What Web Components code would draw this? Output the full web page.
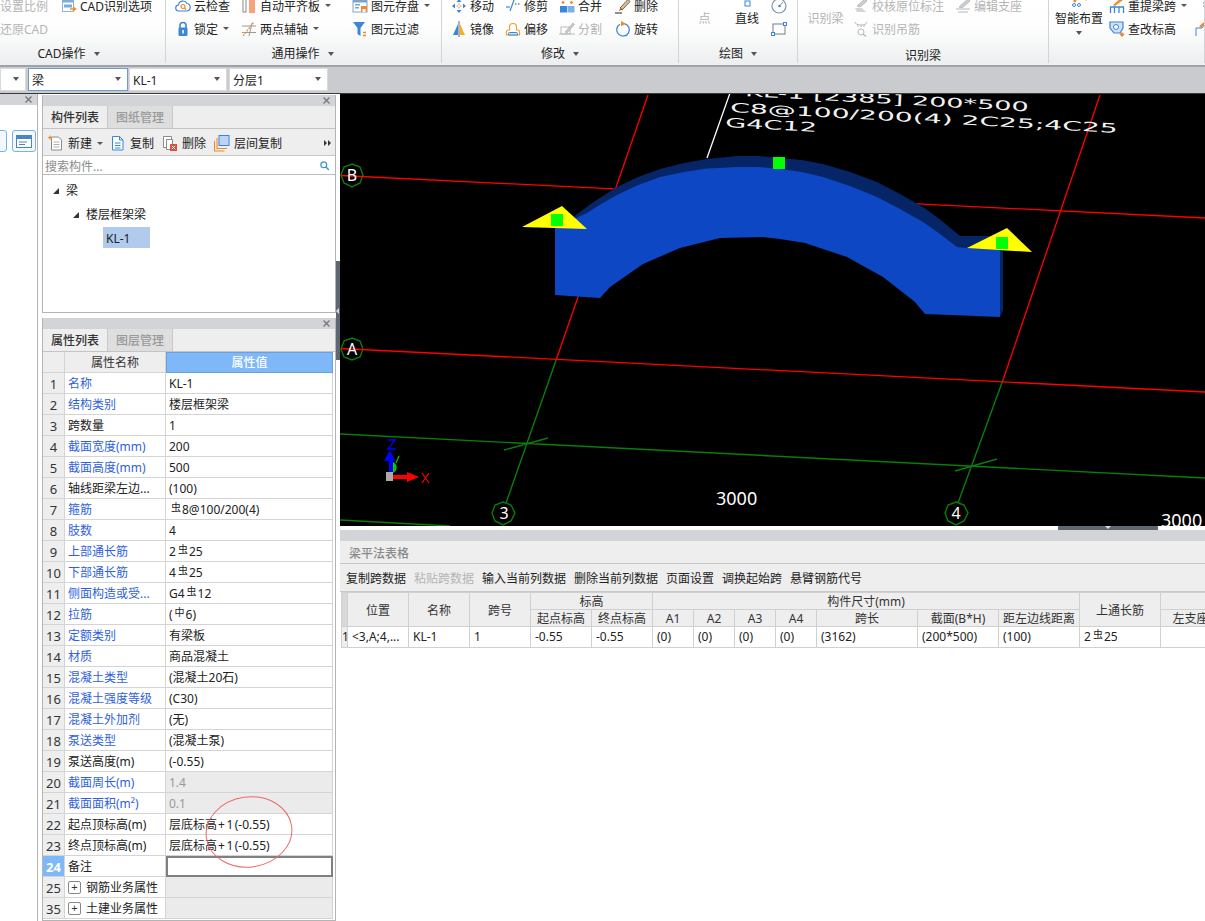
<!DOCTYPE html>
<html lang="zh">
<head>
<meta charset="utf-8">
<title>梁平法表格</title>
<style>
    html, body { margin: 0; height: 100%; overflow: hidden; background: #fff; }
    body { font: 12px/18px "Noto Sans", "Noto Sans CJK SC", sans-serif; color: #222; }
</style>
</head>
<body>
<gld-app></gld-app>

<script>
    (() => {
        const B = "#3a86d8", O = "#f08a2c", G = "#b9b9b9";
        const ICONS = {
            cad: `<rect x="1.5" y="1.5" width="11" height="12" fill="#fff" stroke="#8fb6de"/><rect x="1.5" y="1.5" width="11" height="3" fill="#7fa9d6"/><rect x="3" y="6.5" width="8" height="3" fill="#7fa9d6"/><path d="M9 11h5M12 9l2.500 2-2.500 2" stroke="${O}" fill="none" stroke-width="1.500"/>`,
            cloud: `<path d="M4 13a3 3 0 0 1-.500-6A4.500 4.500 0 0 1 12 5.500 3.800 3.800 0 0 1 12 13z" fill="#fff" stroke="${B}" stroke-width="1.200"/><circle cx="8" cy="8.500" r="2" fill="none" stroke="${O}" stroke-width="1.200"/><path d="M9.500 10l1.500 1.500" stroke="${O}" stroke-width="1.200"/>`,
            plate: `<rect x="2" y="1" width="3" height="13" fill="#fff" stroke="#8a8a8a"/><rect x="8" y="0" width="6" height="15" fill="#f6a27a"/>`,
            save: `<rect x="1" y="2" width="14" height="12" fill="#fff" stroke="#7ba4cf"/><rect x="1" y="2" width="14" height="2.500" fill="#7ba4cf"/><rect x="3" y="6" width="5" height="1.500" fill="#7ba4cf"/><rect x="3" y="9" width="4" height="1.500" fill="#7ba4cf"/><rect x="9" y="8" width="6" height="6" fill="${O}"/><rect x="10.500" y="11" width="3" height="3" fill="#fff"/>`,
            lock: `<path d="M5 7V4.500a3 3 0 0 1 6 0V7" fill="none" stroke="${B}" stroke-width="1.600"/><rect x="3.500" y="6.500" width="9" height="8.500" rx="1.200" fill="${B}"/><rect x="7.300" y="9" width="1.500" height="3.500" fill="#fff"/>`,
            axis: `<path d="M1 11.500h14M1 5h14" stroke="#9a9a9a" stroke-width="1.100"/><path d="M2 15L13 1" stroke="${O}" stroke-width="1.200" stroke-dasharray="2 1"/><path d="M8 15L11 2" stroke="#9a9a9a"/>`,
            filter: `<path d="M1 1h12L8.500 7v8L5.500 13V7z" fill="${B}"/><path d="M11 11.500h3M11 14.500h3" stroke="${O}" stroke-width="1.500"/>`,
            move: `<path d="M8 1l2.500 3h-5zM8 15l2.500-3h-5zM1 8l3-2.500v5zM15 8l-3-2.500v5z" fill="${B}"/><path d="M5.500 8h1.500M9 8h1.500M8 5.500V7M8 9v1.500" stroke="${O}"/>`,
            trim: `<path d="M1 9h4" stroke="${B}" stroke-width="1.200"/><path d="M5 13l4-11" stroke="${B}" stroke-width="1.200"/><path d="M10 6h6" stroke="#444" stroke-dasharray="1.500 1.500"/>`,
            merge: `<rect x="1" y="8" width="7" height="6.500" fill="${B}"/><rect x="8.500" y="8" width="7" height="6.500" fill="#7fb0e5"/><path d="M2.500 4.500h3M11 4.500h3M4 3v3M12.500 3v3" stroke="${O}" stroke-width="1.300"/>`,
            erase: `<path d="M5 10L13 1.500l2 2L7 12z" fill="#d9c3a4" stroke="#7b5a3c"/><path d="M3.500 13L6 9.500 7.500 11.500z" fill="#c65a2a"/><path d="M0 15h7" stroke="#222"/>`,
            mirror: `<path d="M7 3v11H2z" fill="${B}"/><path d="M9 3v11h5z" fill="#f5b21f"/><path d="M8 0v16" stroke="#444" stroke-width=".8"/>`,
            offset: `<path d="M1.500 14v-3a2 2 0 0 1 2-2h1V6a3.500 3.500 0 0 1 7 0v3h1a2 2 0 0 1 2 2v3z" fill="#fff" stroke="#eba430" stroke-width="1.200"/><path d="M3.500 14v-1.500a1 1 0 0 1 1-1h7a1 1 0 0 1 1 1V14z" fill="#cfe1f5" stroke="${B}"/>`,
            split: `<path d="M2 13V6h9v7zM0 13h16" fill="none" stroke="${G}"/><path d="M6 11L14 2l1.500 1.500L8 12z" fill="#c9c9c9" stroke="#aaa" stroke-width=".6"/>`,
            rotate: `<path d="M9.500 2.600A6.300 6.300 0 1 1 5 3.200" fill="none" stroke="${B}" stroke-width="1.300"/><path d="M6 0l5 2.800-5 2.400z" fill="${O}"/>`,
            top1: `<path d="M8 0v5" stroke="#bbb"/>`,
            top2: `<rect x="6" y="7" width="5" height="5" fill="#fff" stroke="${B}"/>`,
            circle: `<circle cx="8" cy="8" r="7" fill="#fff" stroke="#8193a6" stroke-width="1.200"/><circle cx="8.500" cy="8" r="1.300" fill="${B}"/><path d="M9 7.500l3-3.500" stroke="#8193a6"/>`,
            rect: `<rect x="2" y="3" width="12" height="10" fill="#fff" stroke="#6d7d8d"/><rect x="0.500" y="11.500" width="3" height="3" fill="#fff" stroke="${B}"/><rect x="12.500" y="1.500" width="3" height="3" fill="#fff" stroke="${B}"/>`,
            check: `<path d="M2 10h7l4 4H4z" fill="#d5d5d5"/><path d="M4 8L12 1l2 2-7 6z" fill="#cfcfcf" stroke="#bbb"/>`,
            edit: `<path d="M1 11h14M3 14h10" stroke="${G}"/><path d="M4 9L13 1l2 2-8 7z" fill="#cfcfcf" stroke="#bbb"/>`,
            hang: `<path d="M2 1c0 4 12 4 12 0M5 4v2M8 4v2M11 4v2" fill="none" stroke="${G}"/><circle cx="8" cy="11" r="3" fill="none" stroke="${G}"/><path d="M10 13l3 2.500" stroke="${G}" stroke-width="1.500"/>`,
            reset: `<path d="M1.500 15V9h13v6M5.500 9v6M10 9v6" fill="none" stroke="${B}" stroke-width="1.300"/><path d="M4 7l8-7 2 2-8 6z" fill="${O}"/>`,
            level: `<path d="M1 1h13v6l-3 5H5L1 7z" fill="#cfe1f5" stroke="${B}" stroke-width="1.200"/><circle cx="7" cy="6" r="2.500" fill="#fff" stroke="${B}"/><path d="M13 11l2.500 2.500L13 16l-2.500-2.500z" fill="${O}"/>`,
            smart: `<path d="M3 8l4-6M11 0l5 6" stroke="${O}" stroke-width="2.500"/><circle cx="3" cy="11" r="1.500" fill="none" stroke="${B}"/><circle cx="8" cy="11" r="1.500" fill="none" stroke="${B}"/>`,
            edge1: `<path d="M9 4l6-3M9 4v6" stroke="${B}" stroke-dasharray="2 1"/>`,
            edge2: `<path d="M1 15V7h6l3-4 6 4" fill="none" stroke="${B}"/><path d="M5 6l6-5 3 3" stroke="${O}" stroke-width="2.500" fill="none"/>`,
            "new": `<path d="M3.500 2h7l3 3v10h-10z" fill="#fff" stroke="#8c8c8c"/><path d="M5.500 7h6M5.500 9.500h6M5.500 12h6" stroke="#b0b0b0"/><path d="M2 0l.8 1.700L4.500 2.500l-1.700.8L2 5l-.8-1.700L-.500 2.500l1.700-.8z" fill="${O}"/>`,
            copy: `<path d="M2.500 1.500h7l3.500 3.500v10h-10.500z" fill="#fff" stroke="${B}"/><path d="M9.500 1.500V5H13" fill="none" stroke="${B}"/><path d="M5 8h5.500M5 10.500h5.500M5 13h5.500" stroke="${B}"/>`,
            remove: `<path d="M1.500 1.500h8v3h-5v8h-3z" fill="#fff" stroke="#8c8c8c"/><path d="M4.500 4.500h6v10h-6z" fill="#fff" stroke="#8c8c8c"/><rect x="8" y="9" width="7" height="7" fill="#e04a3a"/><path d="M9.800 10.800l3.400 3.400M13.200 10.800l-3.400 3.400" stroke="#fff"/>`,
            floor: `<rect x="5" y="0.500" width="10" height="10" fill="#bcd6f2" stroke="${B}"/><path d="M3 3v10.500h10M.5 6v10h10" fill="none" stroke="${O}" stroke-width="1.100"/>`,
            search: `<circle cx="6.500" cy="6.500" r="4" fill="none" stroke="#3c96c8" stroke-width="1.700"/><path d="M9.500 9.500l4 4" stroke="#3c96c8" stroke-width="2"/>`,
        };

        // 16px icon picked by name
        class GldIcon extends HTMLElement {
            connectedCallback() {
                const root = this.shadowRoot || this.attachShadow({ mode: "open" });
                root.innerHTML = `<style>:host{display:inline-block;width:16px;height:16px;flex:none}svg{display:block;overflow:visible}</style>
                    <svg width="16" height="16" viewBox="0 0 16 16">${ICONS[this.getAttribute("name")] || ""}</svg>`;
            }
        }

        // icon + label tool used in the ribbon and in the panel toolbars
        class GldTool extends HTMLElement {
            connectedCallback() {
                const icon = this.getAttribute("icon");
                const label = this.getAttribute("label") || "";
                const root = this.shadowRoot || this.attachShadow({ mode: "open" });
                root.innerHTML = `<style>
                    :host{display:flex;align-items:center;height:23px;white-space:nowrap;color:#222}
                    :host([off]){color:#b4b4b4}
                    span{margin-left:var(--tool-gap,3px);margin-top:2px;line-height:12px}
                    .plain{margin-left:0}
                    i{width:0;height:0;margin-left:5px;border:3px solid transparent;border-top:3px solid #555;border-bottom:0}
                    </style>
                    ${icon ? `<gld-icon name="${icon}"></gld-icon>` : ""}
                    ${label ? `<span class="${icon ? "" : "plain"}">${label}</span>` : ""}
                    ${this.hasAttribute("arrow") ? "<i></i>" : ""}`;
            }
        }

        // big ribbon button: clipped icon on top, centred label under it
        class GldBigTool extends HTMLElement {
            connectedCallback() {
                const root = this.shadowRoot || this.attachShadow({ mode: "open" });
                root.innerHTML = `<style>
                    :host{display:flex;flex-direction:column;align-items:center;color:#222;white-space:nowrap}
                    :host([off]){color:#b4b4b4}
                    .ic{height:16px}
                    i{width:0;height:0;margin-top:3px;border:3px solid transparent;border-top:4px solid #555;border-bottom:0}
                    </style>
                    <div class="ic"><gld-icon name="${this.getAttribute("icon")}"></gld-icon></div>
                    <div>${this.getAttribute("label")}</div>
                    ${this.hasAttribute("arrow") ? "<i></i>" : ""}`;
            }
        }

        class GldRibCol extends HTMLElement {
            connectedCallback() {
                const root = this.shadowRoot || this.attachShadow({ mode: "open" });
                root.innerHTML = `<style>:host{display:block;flex:none;width:${this.getAttribute("w") || 60}px}</style><slot></slot>`;
            }
        }

        class GldRibGroup extends HTMLElement {
            connectedCallback() {
                const w = this.getAttribute("w");
                const pad = this.getAttribute("pad") || 0;
                const shift = this.getAttribute("shift") || 0;
                const low = this.getAttribute("low") || 0;
                const label = this.getAttribute("label");
                const root = this.shadowRoot || this.attachShadow({ mode: "open" });
                root.innerHTML = `<style>
                    :host{display:block;flex:none;width:${w}px;height:63px;box-sizing:border-box;border-right:1px solid #d2d4d6;overflow:hidden}
                    .cols{display:flex;height:46px;margin-top:-6px;padding-left:${pad}px;box-sizing:border-box}
                    .lab{display:flex;justify-content:center;align-items:center;height:18px;margin-top:${5 + +low}px;padding-right:${shift}px;color:#222}
                    i{width:0;height:0;margin-left:8px;border:3px solid transparent;border-top:4px solid #555;border-bottom:0}
                    </style>
                    <div class="cols"><slot></slot></div>
                    <div class="lab">${label || ""}${this.hasAttribute("noarrow") || !label ? "" : "<i></i>"}</div>`;
            }
        }

        class GldRibbon extends HTMLElement {
            connectedCallback() {
                const root = this.shadowRoot || this.attachShadow({ mode: "open" });
                root.innerHTML = `<style>
                    :host{display:flex;height:67px;box-sizing:border-box;overflow:hidden;border-bottom:2px solid #9fa2a6;
                        background:linear-gradient(#fff 0%,#fdfdfd 45%,#eceeef 100%)}
                    </style><slot></slot>`;
            }
        }

        class GldCombo extends HTMLElement {
            connectedCallback() {
                const root = this.shadowRoot || this.attachShadow({ mode: "open" });
                root.innerHTML = `<style>
                    :host{display:flex;align-items:center;justify-content:space-between;box-sizing:border-box;height:23px;
                        width:${this.getAttribute("w")}px;padding:0 6px 0 3px;background:#fff;border:1px solid #d8dade}
                    :host([focus]){border-color:#6f9ad6}
                    span{padding-top:3px}
                    i{width:0;height:0;border:3px solid transparent;border-top:4px solid #555;border-bottom:0}
                    </style><span>${this.getAttribute("label") || ""}</span><i></i>`;
            }
        }

        class GldComboBar extends HTMLElement {
            connectedCallback() {
                const root = this.shadowRoot || this.attachShadow({ mode: "open" });
                root.innerHTML = `<style>
                    :host{display:flex;align-items:center;gap:2px;height:27px;box-sizing:border-box;padding:0 0 2px;background:#c9cbcf;border-bottom:1px solid #3a3a3a}
                    </style><slot></slot>`;
            }
        }

        // grey strip with the close cross on top of each dock panel
        class GldDockHead extends HTMLElement {
            connectedCallback() {
                const root = this.shadowRoot || this.attachShadow({ mode: "open" });
                root.innerHTML = `<style>
                    :host{display:flex;align-items:center;justify-content:flex-end;height:11px;padding-right:5px;background:#d2d4d8;flex:none}
                    svg{display:block}
                    </style>${this.hasAttribute("noclose") ? "" : '<svg width="7" height="7" viewBox="0 0 7 7"><path d="M.5.5l6 6M6.500.5l-6 6" stroke="#777" stroke-width="1.300"/></svg>'}`;
            }
        }

        class GldTabs extends HTMLElement {
            connectedCallback() {
                const tabs = this.getAttribute("tabs").split(",");
                const root = this.shadowRoot || this.attachShadow({ mode: "open" });
                root.innerHTML = `<style>
                    :host{display:flex;height:23px;box-sizing:border-box;background:#eee;border-bottom:1px solid #c4c4c4;flex:none}
                    div{width:64px;text-align:center;line-height:24px;font-weight:500;box-sizing:content-box;border-right:1px solid #c8c8c8;color:#9a9a9a;background:#dedede}
                    div:first-of-type{color:#333;background:#eee}
                    </style>${tabs.map(t => `<div>${t}</div>`).join("")}`;
            }
        }

        class GldComponentPanel extends HTMLElement {
            connectedCallback() {
                const root = this.shadowRoot || this.attachShadow({ mode: "open" });
                root.innerHTML = `<style>
                    :host{display:flex;flex-direction:column;height:218px;box-sizing:border-box;border:1px solid #b4b4b4;border-top:0;background:#fff}
                    .bar{--tool-gap:4px;display:flex;align-items:center;height:27px;box-sizing:border-box;padding:2px 0 0 5px;background:#eee;border-bottom:1px solid #c8c8c8;flex:none}
                    .bar gld-tool{margin-right:8px}
                    .bar gld-tool:first-child{margin-right:7px}
                    .more{display:block;margin-left:auto;margin-right:4px}
                    .find{display:flex;align-items:center;justify-content:space-between;height:19px;box-sizing:border-box;padding:3px 5px 0 2px;color:#8c8c8c;border-bottom:1px solid #bdbdbd;flex:none}
                    .find svg{display:block;margin-top:-3px}
                    .tree{flex:1;padding-top:4px}
                    .node{display:flex;align-items:center;height:24px}
                    .tri{width:0;height:0;border-style:solid;border-width:0 0 6px 6px;border-color:transparent transparent #333 transparent;margin-right:7px}
                    .sel{display:flex;align-items:center;width:47px;height:21px;margin:0 0 0 60px;padding:2px 0 0 3px;box-sizing:border-box;background:#b0cbec}
                    </style>
                    <gld-dock-head></gld-dock-head>
                    <gld-tabs tabs="构件列表,图纸管理"></gld-tabs>
                    <div class="bar">
                        <gld-tool icon="new" label="新建" arrow></gld-tool>
                        <gld-tool icon="copy" label="复制"></gld-tool>
                        <gld-tool icon="remove" label="删除"></gld-tool>
                        <gld-tool icon="floor" label="层间复制"></gld-tool>
                        <svg class="more" width="7" height="6" viewBox="0 0 7 6"><path d="M0 0l3 3-3 3zM4 0l3 3-3 3z" fill="#333"/></svg>
                    </div>
                    <div class="find"><span>搜索构件...</span><svg width="11" height="11" viewBox="0 0 15 15">${ICONS.search}</svg></div>
                    <div class="tree">
                        <div class="node" style="padding-left:10px"><i class="tri"></i>梁</div>
                        <div class="node" style="padding-left:30px"><i class="tri"></i>楼层框架梁</div>
                        <div class="sel">KL-1</div>
                    </div>`;
            }
        }

        const S = '<b class="s">虫</b>';
        const TOP = '层底标高<span class="l">+1</span>(-0.55)';
        const PROPS = [
            ["1", "名称", "KL-1", 1], ["2", "结构类别", "楼层框架梁", 1], ["3", "跨数量", "1"],
            ["4", "截面宽度(mm)", "200", 1], ["5", "截面高度(mm)", "500", 1], ["6", "轴线距梁左边...", "(100)"],
            ["7", "箍筋", S + "8@100/200(4)", 1], ["8", "肢数", "4", 1], ["9", "上部通长筋", "2" + S + "25", 1],
            ["10", "下部通长筋", "4" + S + "25", 1], ["11", "侧面构造或受...", "G4" + S + "12", 1],
            ["12", "拉筋", '(<b class="s">中</b>6)', 1], ["13", "定额类别", "有梁板", 1], ["14", "材质", "商品混凝土", 1],
            ["15", "混凝土类型", "(混凝土20石)", 1], ["16", "混凝土强度等级", "(C30)", 1], ["17", "混凝土外加剂", "(无)", 1],
            ["18", "泵送类型", "(混凝土泵)", 1], ["19", "泵送高度(m)", "(-0.55)"], ["20", "截面周长(m)", "1.4", 1, "ro"],
            ["21", "截面面积(m²)", "0.1", 1, "ro"], ["22", "起点顶标高(m)", TOP],
            ["23", "终点顶标高(m)", TOP], ["24", "备注", "", 0, "cur"],
            ["25", "钢筋业务属性", "", 0, "grp"], ["35", "土建业务属性", "", 0, "grp"],
        ];

        class GldPropsPanel extends HTMLElement {
            connectedCallback() {
                const rows = PROPS.map(([n, name, val, link, kind]) => `
                    <div class="n ${kind || ""}">${n}</div>
                    <div class="k ${link ? "link" : ""}">${kind === "grp" ? '<i class="plus">+</i>' : ""}${name}</div>
                    <div class="v ${kind || ""}">${val}</div>`).join("");
                const root = this.shadowRoot || this.attachShadow({ mode: "open" });
                root.innerHTML = `<style>
                    :host{display:flex;flex-direction:column;flex:1;min-height:0;position:relative;box-sizing:border-box;border:1px solid #b4b4b4;border-top:0;background:#fff}
                    .grid{display:grid;grid-template-columns:22px 101px 167px;grid-auto-rows:21px;overflow:hidden}
                    .grid > div{box-sizing:border-box;border-right:1px solid #d4d4d4;border-bottom:1px solid #d4d4d4;line-height:22px;white-space:nowrap;overflow:hidden}
                    .h{text-align:center;background:#eee;color:#333}
                    .grid > .h.val{background:#7eb8f8;color:#fff;font-weight:500;border:1px solid #6aa0dc;line-height:20px}
                    .n{text-align:center;background:#eee;color:#333;font-size:13px}
                    .n.cur{background:#7eb8f8;color:#fff;font-weight:700}
                    .k{padding-left:3px;color:#222}
                    .k.link{color:#2f5fdc}
                    .v{padding-left:3px;color:#222}
                    .v.ro,.v.grp{background:#ebebeb;color:#999}
                    .grid > .v.cur{border:2px solid #808080}
                    .plus{display:inline-block;width:11px;height:11px;margin-right:5px;border:1px solid #888;border-radius:2px;font:11px/10px "Liberation Sans",sans-serif;text-align:center;vertical-align:1px;color:#333}
                    .s{font-size:10px;line-height:0;font-weight:400;vertical-align:3px;margin:0 1px 0 2px}
                    .l{letter-spacing:1.500px;margin-left:1px}
                    .note{position:absolute;left:150px;top:470px}
                    </style>
                    <gld-dock-head></gld-dock-head>
                    <gld-tabs tabs="属性列表,图层管理"></gld-tabs>
                    <div class="grid">
                        <div class="h"></div><div class="h">属性名称</div><div class="h val">属性值</div>
                        ${rows}
                    </div>
                    <svg class="note" width="110" height="90" viewBox="0 0 110 90"><ellipse cx="56" cy="44" rx="43" ry="35" transform="rotate(-8 56 44)" fill="none" stroke="#ec6a6a"/></svg>`;
            }
        }

        class GldSidePanel extends HTMLElement {
            connectedCallback() {
                const root = this.shadowRoot || this.attachShadow({ mode: "open" });
                root.innerHTML = `<style>
                    :host{display:block;flex:none;width:38px;box-sizing:border-box;border-right:1px solid #b4b4b4;background:#fff}
                    .btns{display:flex;gap:5px;margin:25px 0 0 -17px}
                    .b{flex:none;width:24px;height:22px;box-sizing:border-box;border:1px solid #78b2ee;border-radius:3px;background:#f2f8fe;display:flex;align-items:center;justify-content:center}
                    svg{display:block}
                    </style>
                    <gld-dock-head></gld-dock-head>
                    <div class="btns">
                        <div class="b"></div>
                        <div class="b"><svg width="16" height="13" viewBox="0 0 16 13"><rect x=".5" y=".5" width="15" height="12" fill="#fff" stroke="#4a84c4"/><rect x=".5" y=".5" width="15" height="3.500" fill="#4a84c4"/><path d="M3 7h8M3 9.500h6" stroke="#4a84c4"/></svg></div>
                    </div>`;
            }
        }

        class GldCadView extends HTMLElement {
            connectedCallback() {
                const root = this.shadowRoot || this.attachShadow({ mode: "open" });
                root.innerHTML = `<style>
                    :host{display:block;height:432px;background:#000;overflow:hidden;flex:none}
                    svg{display:block}
                    text{font-family:"DejaVu Sans",sans-serif}
                    .num{font-family:"Noto Sans",sans-serif;font-size:18px;fill:#fff}
                    .ax{font-family:"Noto Sans",sans-serif;font-size:16px;fill:#fff;text-anchor:middle}
                    .note{fill:#f2f2f2;font-size:13px}
                    </style>
                    <svg width="865" height="432" viewBox="340 94 865 432">
                        <g fill="none" stroke="#0a7d0a" stroke-width="1.400">
                            <path d="M340 434L1205 478M340 520L450 526M504 450L548 438M955 471L997 459"/>
                            <path d="M556.500 359L506 503M1003 380L958 503"/>
                            <polygon points="352,164 360,167 363,175 360,183 352,187 344,183 341,175 344,167"/>
                            <polygon points="352,338 360,341 363,349 360,357 352,360 344,357 341,349 344,341"/>
                            <polygon points="503,502 511,505 515,513 511,521 503,525 495,521 492,513 495,505"/>
                            <polygon points="956,502 964,505 968,513 964,521 956,525 948,521 945,513 948,505"/>
                        </g>
                        <g fill="none" stroke="#f00" stroke-width="1.300">
                            <path d="M341 175.500L1205 218M341 348.500L1205 392"/>
                            <path d="M648 95L556.500 359M1100 95L1003 380"/>
                        </g>
                        <path d="M730 93L707 158" stroke="#fff" stroke-width="1.300"/>
                        <text class="note" x="745" y="96" textLength="284" lengthAdjust="spacingAndGlyphs" transform="rotate(3.100 745 96)">KL-1 [2385] 200*500</text>
                        <text class="note" x="730" y="112" textLength="388" lengthAdjust="spacingAndGlyphs" transform="rotate(3.100 730 112)">C8@100/200(4) 2C25;4C25</text>
                        <text class="note" x="725" y="127" textLength="92" lengthAdjust="spacingAndGlyphs" transform="rotate(3.100 725 127)">G4C12</text>
                        <polygon fill="#052566" points="573,217 595,201 617,187 638,177 660,169 684,163 707,159 737,156 758,156 780,158 802,160 823,164 850,172 877,182 900,194 923,207 942,221 960,236 993,236 1000,250 957,247 584,228"/>
                        <polygon fill="#052566" points="1000,250 1003,250 1003,310 1000,317"/>
                        <polygon fill="#0d47c4" points="555,228 587,213 601,204 617,195 638,185 660,177 684,172 707,168.500 737,167 758,167 780,169 802,172 823,177 850,186 877,197 900,209 923,222 940,234 957,247 1000,250 1000,317 925,314 915,302 883,277 847,257 805,243 780,239 763,237 720,238 680,248 643,264 610,287 600,298 555,295"/>
                        <polygon fill="#ff0" points="522,227 562,206 587,229"/>
                        <polygon fill="#ff0" points="967,248 1007,228 1032,252"/>
                        <rect x="551" y="214" width="12" height="12" fill="#0f0"/>
                        <rect x="773" y="157" width="12" height="12" fill="#0f0"/>
                        <rect x="996" y="237" width="12" height="12" fill="#0f0"/>
                        <text class="ax" x="352" y="181">B</text>
                        <text class="ax" x="352" y="355">A</text>
                        <text class="ax" x="504" y="519">3</text>
                        <text class="ax" x="956" y="519">4</text>
                        <text class="num" x="716" y="505">3000</text>
                        <text class="num" x="1161" y="527">3000</text>
                        <path d="M388 440h7l-7 9h7M387 449h9" fill="none" stroke="#00f" stroke-width="1.300"/>
                        <path d="M390 450l-6 11h11z" fill="#00f"/>
                        <rect x="389" y="461" width="4" height="12" fill="#00f"/>
                        <path d="M393 462a6 6 0 0 1 0 11z" fill="#0c0"/>
                        <path d="M396 463l3-7" stroke="#0c0" stroke-width="1.200"/>
                        <rect x="386" y="472" width="7" height="9" fill="#aaa"/>
                        <rect x="393" y="475" width="14" height="4" fill="#f00"/>
                        <path d="M407 472l12 5-12 5z" fill="#f00"/>
                        <path d="M422 473l7 10M429 473l-7 10" stroke="#f00" stroke-width="1.200"/>
                    </svg>`;
            }
        }

        class GldSpanTable extends HTMLElement {
            connectedCallback() {
                const widths = [6, 61, 61, 61, 61, 61, 41, 41, 41, 41, 101, 81, 81, 81, 84];
                const root = this.shadowRoot || this.attachShadow({ mode: "open" });
                root.innerHTML = `<style>
                    :host{display:flex;flex-direction:column;flex:1;min-height:0;min-width:0;overflow:hidden;background:#fff}
                    .title{height:23px;box-sizing:border-box;padding-left:9px;line-height:25px;color:#8a8a8a;font-weight:500;background:#eee;border-bottom:1px solid #c8c8c8;flex:none}
                    .bar{display:flex;gap:8px;align-items:center;height:28px;box-sizing:border-box;padding:3px 0 0 6px;background:#eee;border-bottom:1px solid #c8c8c8;flex:none;white-space:nowrap}
                    .off{color:#b4b4b4}
                    table{border-collapse:collapse;table-layout:fixed;width:903px;margin-left:1px;flex:none}
                    th,td{border:1px solid #d0d0d0;padding:0;font-weight:400;color:#333;white-space:nowrap;overflow:hidden}
                    th{background:#eee;height:15px;line-height:15px;padding-top:1px;text-align:center}
                    td{height:20px;line-height:20px;padding-left:4px;color:#222;background:#fff}
                    th.g{background:#d8d8d8}
                    td.g{background:#eee;padding:0;text-align:center}
                    .s{font-size:10px;line-height:0;vertical-align:3px;margin:0 1px 0 2px}
                    </style>
                    <gld-dock-head noclose></gld-dock-head>
                    <div class="title">梁平法表格</div>
                    <div class="bar">
                        <span>复制跨数据</span><span class="off">粘贴跨数据</span><span>输入当前列数据</span><span>删除当前列数据</span><span>页面设置</span><span>调换起始跨</span><span>悬臂钢筋代号</span>
                    </div>
                    <table>
                        <colgroup>${widths.map(w => `<col style="width:${w}px">`).join("")}</colgroup>
                        <tr><th rowspan="2" class="g"></th><th rowspan="2">位置</th><th rowspan="2">名称</th><th rowspan="2">跨号</th><th colspan="2">标高</th><th colspan="7">构件尺寸(mm)</th><th rowspan="2">上通长筋</th><th></th></tr>
                        <tr><th>起点标高</th><th>终点标高</th><th>A1</th><th>A2</th><th>A3</th><th>A4</th><th>跨长</th><th>截面(B*H)</th><th>距左边线距离</th><th>左支座钢筋</th></tr>
                        <tr><td class="g">1</td><td>&lt;3,A;4,...</td><td>KL-1</td><td>1</td><td>-0.55</td><td>-0.55</td><td>(0)</td><td>(0)</td><td>(0)</td><td>(0)</td><td>(3162)</td><td>(200*500)</td><td>(100)</td><td>2<span class="s">虫</span>25</td><td></td></tr>
                    </table>`;
            }
        }

        class GldApp extends HTMLElement {
            connectedCallback() {
                const root = this.shadowRoot || this.attachShadow({ mode: "open" });
                root.innerHTML = `<style>
                    :host{display:flex;flex-direction:column;width:1205px;height:921px;overflow:hidden}
                    .main{display:flex;flex:1;min-height:0}
                    .mid{display:flex;flex-direction:column;flex:none;width:294px;margin-left:4px;gap:5px;padding-top:1px}
                    .split{flex:none;width:4px;display:flex;flex-direction:column;padding-top:167px}
                    .split div{display:flex;align-items:center;height:99px;background:#5e6670}
                    .split i{width:0;height:0;border:3px solid transparent;border-right:3px solid #ddd;border-left:0}
                    .right{display:flex;flex-direction:column;flex:1;min-width:0}
                    .hsplit{display:flex;justify-content:flex-end;height:4px;padding-right:47px;flex:none}
                    .hsplit div{display:flex;justify-content:center;width:100px;background:#5e6670}
                    .hsplit i{width:0;height:0;border:3px solid transparent;border-top:3px solid #ddd;border-bottom:0}
                    .narrow{margin-left:-1px}
                    </style>
                    <gld-ribbon>
                        <gld-rib-group w="166" label="CAD操作" shift="28">
                            <gld-rib-col w="61"><gld-tool off label="设置比例"></gld-tool><gld-tool off label="还原CAD"></gld-tool></gld-rib-col>
                            <gld-rib-col w="100"><gld-tool icon="cad" label="CAD识别选项"></gld-tool></gld-rib-col>
                        </gld-rib-group>
                        <gld-rib-group w="276" pad="9" label="通用操作" shift="2">
                            <gld-rib-col w="66"><gld-tool icon="cloud" label="云检查"></gld-tool><gld-tool icon="lock" label="锁定" arrow></gld-tool></gld-rib-col>
                            <gld-rib-col w="111"><gld-tool icon="plate" label="自动平齐板" arrow></gld-tool><gld-tool icon="axis" label="两点辅轴" arrow></gld-tool></gld-rib-col>
                            <gld-rib-col w="85"><gld-tool icon="save" label="图元存盘" arrow></gld-tool><gld-tool icon="filter" label="图元过滤"></gld-tool></gld-rib-col>
                        </gld-rib-group>
                        <gld-rib-group w="237" pad="9" label="修改">
                            <gld-rib-col w="54"><gld-tool icon="move" label="移动"></gld-tool><gld-tool icon="mirror" label="镜像"></gld-tool></gld-rib-col>
                            <gld-rib-col w="54"><gld-tool icon="trim" label="修剪"></gld-tool><gld-tool icon="offset" label="偏移"></gld-tool></gld-rib-col>
                            <gld-rib-col w="56"><gld-tool icon="merge" label="合并"></gld-tool><gld-tool off icon="split" label="分割"></gld-tool></gld-rib-col>
                            <gld-rib-col w="50"><gld-tool icon="erase" label="删除"></gld-tool><gld-tool icon="rotate" label="旋转"></gld-tool></gld-rib-col>
                        </gld-rib-group>
                        <gld-rib-group w="119" label="绘图">
                            <gld-rib-col w="51"><gld-big-tool off icon="top1" label="点"></gld-big-tool></gld-rib-col>
                            <gld-rib-col w="34"><gld-big-tool icon="top2" label="直线"></gld-big-tool></gld-rib-col>
                            <gld-rib-col w="20" style="margin-left:7px"><gld-tool icon="circle"></gld-tool><gld-tool icon="rect"></gld-tool></gld-rib-col>
                        </gld-rib-group>
                        <gld-rib-group w="251" label="识别梁" noarrow low="2">
                            <gld-rib-col w="55"><gld-big-tool off icon="top1" label="识别梁"></gld-big-tool></gld-rib-col>
                            <gld-rib-col w="102"><gld-tool off icon="check" label="校核原位标注"></gld-tool><gld-tool off icon="hang" label="识别吊筋"></gld-tool></gld-rib-col>
                            <gld-rib-col w="80"><gld-tool off icon="edit" label="编辑支座"></gld-tool></gld-rib-col>
                        </gld-rib-group>
                        <gld-rib-group w="156">
                            <gld-rib-col w="60"><gld-big-tool icon="smart" label="智能布置" arrow></gld-big-tool></gld-rib-col>
                            <gld-rib-col w="86"><gld-tool icon="reset" label="重提梁跨" arrow></gld-tool><gld-tool icon="level" label="查改标高"></gld-tool></gld-rib-col>
                            <gld-rib-col w="10"><gld-tool icon="edge1"></gld-tool><gld-tool icon="edge2"></gld-tool></gld-rib-col>
                        </gld-rib-group>
                    </gld-ribbon>
                    <gld-combo-bar>
                        <gld-combo w="26"></gld-combo>
                        <gld-combo w="100" label="梁" focus></gld-combo>
                        <gld-combo class="narrow" w="98" label="KL-1"></gld-combo>
                        <gld-combo w="99" label="分层1"></gld-combo>
                    </gld-combo-bar>
                    <div class="main">
                        <gld-side-panel></gld-side-panel>
                        <div class="mid">
                            <gld-component-panel></gld-component-panel>
                            <gld-props-panel></gld-props-panel>
                        </div>
                        <div class="split"><div><i></i></div></div>
                        <div class="right">
                            <gld-cad-view></gld-cad-view>
                            <div class="hsplit"><div><i></i></div></div>
                            <gld-span-table></gld-span-table>
                        </div>
                    </div>`;
            }
        }

        const defs = {
            "gld-icon": GldIcon, "gld-tool": GldTool, "gld-big-tool": GldBigTool, "gld-rib-col": GldRibCol,
            "gld-rib-group": GldRibGroup, "gld-ribbon": GldRibbon, "gld-combo": GldCombo, "gld-combo-bar": GldComboBar,
            "gld-dock-head": GldDockHead, "gld-tabs": GldTabs, "gld-component-panel": GldComponentPanel,
            "gld-props-panel": GldPropsPanel, "gld-side-panel": GldSidePanel, "gld-cad-view": GldCadView,
            "gld-span-table": GldSpanTable, "gld-app": GldApp,
        };
        Object.keys(defs).forEach(name => {
            if (!window.customElements.get(name)) {
                window.customElements.define(name, defs[name]);
            }
        });
    })();
</script>
</body>
</html>
